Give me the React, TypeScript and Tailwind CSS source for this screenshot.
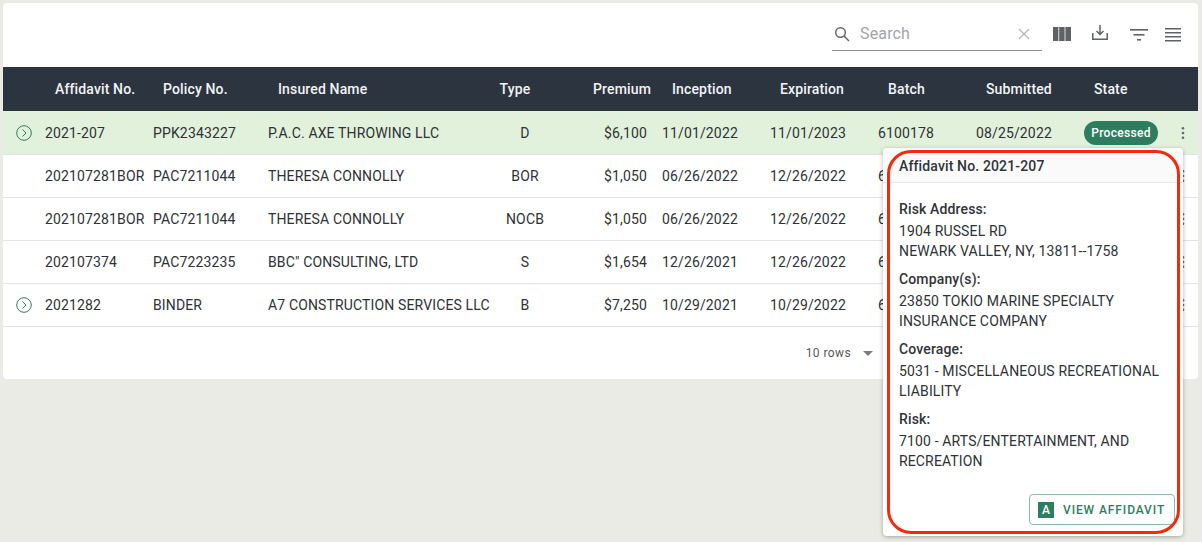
const cols = "grid grid-cols-[42px_108px_115px_212px_90px_92px_108px_108px_98px_108px_86px_28px]";

type Row = { icon: boolean; a: string; p: string; n: string; t: string; pr: string; i: string; e: string; selected?: boolean };
const rows: Row[] = [
  { icon: true, a: "2021-207", p: "PPK2343227", n: "P.A.C. AXE THROWING LLC", t: "D", pr: "$6,100", i: "11/01/2022", e: "11/01/2023", selected: true },
  { icon: false, a: "202107281BOR", p: "PAC7211044", n: "THERESA CONNOLLY", t: "BOR", pr: "$1,050", i: "06/26/2022", e: "12/26/2022" },
  { icon: false, a: "202107281BOR", p: "PAC7211044", n: "THERESA CONNOLLY", t: "NOCB", pr: "$1,050", i: "06/26/2022", e: "12/26/2022" },
  { icon: false, a: "202107374", p: "PAC7223235", n: "BBC\" CONSULTING, LTD", t: "S", pr: "$1,654", i: "12/26/2021", e: "12/26/2022" },
  { icon: true, a: "2021282", p: "BINDER", n: "A7 CONSTRUCTION SERVICES LLC", t: "B", pr: "$7,250", i: "10/29/2021", e: "10/29/2022" },
];

function Dots() {
  return (
    <svg width="4" height="14" viewBox="0 0 4 14" className="fill-[#63686c]">
      <circle cx="2" cy="2.2" r="1.3" /><circle cx="2" cy="7" r="1.3" /><circle cx="2" cy="11.8" r="1.3" />
    </svg>
  );
}

function Section({ label, lines }: { label: string; lines: string[] }) {
  return (
    <div className="mb-[8px]">
      <div className="h-[22px] pb-[2px] font-medium leading-[20px] text-[#303438]">{label}</div>
      {lines.map((l) => (
        <div key={l} className="h-[20px] leading-[20px]">{l}</div>
      ))}
    </div>
  );
}

export default function App() {
  return (
    <div className="relative h-[542px] w-[1202px] overflow-hidden bg-[#e9ebe4] pl-[3px] pt-[3px] font-['Roboto',sans-serif] text-[14px] tracking-[0.14px] text-[#2e3236]">
      <div className="w-[1195px] overflow-hidden rounded-[4px] bg-white">
        <div className="flex h-[64px] items-start">
          <div className="ml-[829px] mt-[15px] flex h-[33px] w-[210px] items-center border-b border-[#8c8f91] pl-[2px]">
            <svg width="16" height="16" viewBox="0 0 16 16" fill="none" stroke="#666" strokeWidth="1.5">
              <circle cx="6.5" cy="6.5" r="4.8" /><path d="M10 10l5 5" />
            </svg>
            <span className="ml-[10px] text-[16px] tracking-[0.15px] text-[#a3a5a7]">Search</span>
            <svg className="ml-auto mr-[12px]" width="12" height="12" viewBox="0 0 12 12" stroke="#b5b6b8" strokeWidth="1.2">
              <path d="M1 1l10 10M11 1L1 11" />
            </svg>
          </div>
          <svg className="ml-[11px] mt-[24px]" width="18" height="14" viewBox="0 0 18 14" fill="#5e6265">
            <rect width="5.4" height="14" /><rect x="6.2" width="5.4" height="14" /><rect x="12.4" width="5.6" height="14" />
          </svg>
          <svg className="ml-[21px] mt-[22px]" width="16" height="16" viewBox="0 0 16 16" fill="none" stroke="#5e6265" strokeWidth="1.5">
            <path d="M8 0v9M4.5 6L8 9.5 11.5 6M.8 8v6.2h14.4V8" />
          </svg>
          <svg className="ml-[22px] mt-[26px]" width="18" height="12" viewBox="0 0 18 12" fill="#5e6265">
            <rect width="18" height="1.6" /><rect x="3.5" y="5" width="11" height="1.6" /><rect x="7" y="10" width="4" height="1.6" />
          </svg>
          <svg className="ml-[17px] mt-[25px]" width="16" height="14" viewBox="0 0 16 14" fill="#5e6265">
            <rect width="16" height="1.5" /><rect y="4" width="16" height="1.5" /><rect y="8" width="16" height="1.5" /><rect y="12" width="16" height="1.5" />
          </svg>
        </div>

        <div className={`${cols} h-[44px] items-center bg-[#2c3440] font-medium text-[#f2f3f4]`}>
          <div />
          <div className="pl-[10px]">Affidavit No.</div>
          <div className="pl-[10px]">Policy No.</div>
          <div className="pl-[10px]">Insured Name</div>
          <div className="pr-[20px] text-center">Type</div>
          <div className="pr-[11px] text-right">Premium</div>
          <div className="pl-[10px]">Inception</div>
          <div className="pl-[10px]">Expiration</div>
          <div className="pl-[10px]">Batch</div>
          <div className="pl-[10px]">Submitted</div>
          <div className="pl-[10px]">State</div>
          <div />
        </div>

        {rows.map((r, idx) => (
          <div key={idx} className={`${cols} items-center border-b border-[#e2e3e3] ${r.selected ? "h-[44px] bg-[#e2f1dc] pt-[1px]" : "h-[43px] bg-white"}`}>
            <div className="flex justify-center">
              {r.icon && (
                <svg width="16" height="16" viewBox="0 0 16 16" fill="none" stroke="#2f7d5f" strokeWidth="1">
                  <circle cx="8" cy="8" r="7.3" /><path d="M6.5 4.5L10 8l-3.5 3.5" />
                </svg>
              )}
            </div>
            <div>{r.a}</div>
            <div>{r.p}</div>
            <div className="whitespace-nowrap">{r.n}</div>
            <div className="text-center">{r.t}</div>
            <div className="pr-[15px] text-right">{r.pr}</div>
            <div>{r.i}</div>
            <div>{r.e}</div>
            {r.selected ? <div>6100178</div> : <div className="w-[5px] overflow-hidden whitespace-nowrap">6100178</div>}
            <div>{r.selected ? "08/25/2022" : ""}</div>
            <div>
              {r.selected && (
                <span className="block h-[24px] w-[74px] rounded-full bg-[#2f7d5f] text-center text-[12px] font-medium leading-[24px] tracking-[0.3px] text-white">Processed</span>
              )}
            </div>
            <div className="flex justify-center pr-[2px]"><Dots /></div>
          </div>
        ))}

        <div className="flex h-[52px] items-center justify-end pr-[325px] text-[12px] tracking-[0.4px] text-[#55595c]">
          <span>10 rows</span>
          <svg className="ml-[12px]" width="10" height="5" viewBox="0 0 10 5" fill="#7a7d80"><path d="M0 0h10L5 5z" /></svg>
        </div>
      </div>

      <div className="absolute left-[883px] top-[148px] h-[388px] w-[300px] overflow-hidden rounded-[4px] bg-white shadow-[0_1px_4px_rgba(0,0,0,0.3)]">
        <div className="flex h-[35px] items-center border-b border-[#e8e8e8] bg-[#fafafa] pl-[16px] pt-[2px] font-medium text-[#303438]">Affidavit No. 2021-207</div>
        <div className="pl-[16px] pr-[14px] pt-[16px]">
          <Section label="Risk Address:" lines={["1904 RUSSEL RD", "NEWARK VALLEY, NY, 13811--1758"]} />
          <Section label="Company(s):" lines={["23850 TOKIO MARINE SPECIALTY", "INSURANCE COMPANY"]} />
          <Section label="Coverage:" lines={["5031 - MISCELLANEOUS RECREATIONAL", "LIABILITY"]} />
          <Section label="Risk:" lines={["7100 - ARTS/ENTERTAINMENT, AND", "RECREATION"]} />
        </div>
        <div className="absolute bottom-[11px] right-[8px] flex h-[31px] w-[146px] items-center rounded-[4px] border border-[#8fb8a6] pl-[8px] text-[12px] font-medium tracking-[0.9px] text-[#2f7d5f]">
          <span className="flex h-[16px] w-[16px] items-center justify-center bg-[#2f7d5f] text-[12px] font-medium leading-none tracking-normal text-white">A</span>
          <span className="ml-[9px]">VIEW AFFIDAVIT</span>
        </div>
      </div>

      <div className="pointer-events-none absolute left-[887px] top-[150px] h-[384px] w-[293px] rounded-[24px] border-[3px] border-[#f52a0c]" />
    </div>
  );
}
